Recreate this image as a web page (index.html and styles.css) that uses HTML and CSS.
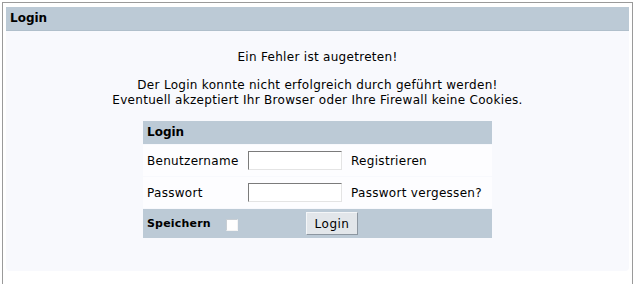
FILE: index.html
```html
<!DOCTYPE html>
<html lang="de">

<head>
    <meta charset="UTF-8">
    <title>Login</title>
    <link rel="stylesheet" href="styles.css">
</head>

<body>
    <div class="frame">
        <div class="panel">
            <div class="panel-title">Login</div>

            <!-- Fehlermeldung -->
            <div class="message">
                <p>Ein Fehler ist augetreten!</p>
                <p class="detail">Der Login konnte nicht erfolgreich durch geführt werden!<br>
                    Eventuell akzeptiert Ihr Browser oder Ihre Firewall keine Cookies.</p>
            </div>

            <!-- Login Formular -->
            <form class="login-box" onsubmit="return false;">
                <div class="login-head">Login</div>
                <div class="login-row">
                    <label for="user">Benutzername</label>
                    <input type="text" id="user" class="field">
                    <a href="#">Registrieren</a>
                </div>
                <div class="login-row">
                    <label for="pass">Passwort</label>
                    <input type="password" id="pass" class="field">
                    <a href="#">Passwort vergessen?</a>
                </div>
                <div class="login-foot">
                    <span class="remember">Speichern</span>
                    <input type="checkbox" class="check">
                    <button type="submit" class="btn">Login</button>
                </div>
            </form>
        </div>
    </div>
</body>

</html>
```

FILE: styles.css
```css
* {
    margin: 0;
    padding: 0;
    box-sizing: border-box;
}

body {
    background: #ffffff;
    color: #000000;
    font-family: "DejaVu Sans", Verdana, sans-serif;
    font-size: 12px;
    letter-spacing: 0.3px;
}

/* Outer frame */
.frame {
    margin: 2px 3px 0 2px;
    height: 320px;
    border: 1px solid #9a9a9a;
    border-bottom: none;
    padding: 4px 3px 0 3px;
}

.panel {
    background: #f8f9fd;
    border-radius: 0 0 4px 4px;
    padding-bottom: 33px;
}

.panel-title {
    height: 24px;
    line-height: 23px;
    padding-left: 4px;
    background: #bccad6;
    border-bottom: 1px solid #b0bfcb;
    font-size: 12px;
    font-weight: bold;
    letter-spacing: 0;
}

/* Message */
.message {
    text-align: center;
    line-height: 15px;
    padding-top: 19px;
}

.message .detail {
    margin-top: 13px;
}

/* Login box */
.login-box {
    width: 349px;
    margin: 13px auto 0;
}

.login-head {
    height: 23px;
    line-height: 23px;
    padding-left: 4px;
    background: #bccad6;
    font-size: 12px;
    font-weight: bold;
    letter-spacing: 0;
}

.login-row {
    display: grid;
    grid-template-columns: 105px 103px 1fr;
    align-items: center;
    height: 31px;
    background: #fdfdff;
    margin-top: 1px;
}

.login-row label {
    padding-left: 4px;
}

.login-row a {
    color: #000000;
    text-decoration: none;
}

.field {
    width: 94px;
    height: 19px;
    background: #ffffff;
    border: 1px solid;
    border-color: #7b7b7b #e4e4e4 #e4e4e4 #7b7b7b;
    outline: none;
}

.login-foot {
    display: flex;
    align-items: center;
    height: 29px;
    margin-top: 1px;
    padding-left: 4px;
    background: #bccad6;
}

.remember {
    font-size: 11px;
    font-weight: bold;
    letter-spacing: 0.2px;
    width: 79px;
}

.check {
    appearance: none;
    width: 12px;
    height: 12px;
    background: #ffffff;
    border: 1px solid;
    border-color: #c8ced4 #f4f4f4 #f4f4f4 #c8ced4;
    margin-top: 3px;
}

.btn {
    margin-left: 68px;
    width: 52px;
    height: 23px;
    font-family: "DejaVu Sans", Verdana, sans-serif;
    font-size: 12px;
    letter-spacing: 0.5px;
    color: #000000;
    background: #e2e6ea;
    border: 1px solid;
    border-color: #f4f6f8 #8c96a0 #8c96a0 #f4f6f8;
}
```
